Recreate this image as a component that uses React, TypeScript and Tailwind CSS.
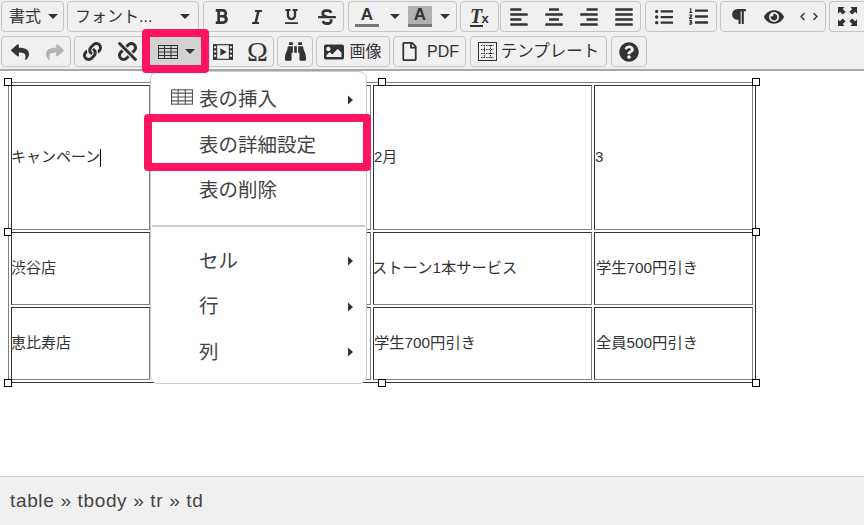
import React from "react";
import { FaBinoculars, FaImage, FaLink, FaUnlink, FaQuestionCircle, FaEye, FaParagraph, FaBold, FaItalic, FaUnderline, FaStrikethrough, FaListUl, FaListOl, FaAlignLeft, FaAlignCenter, FaAlignRight, FaAlignJustify, FaReply, FaShare, FaChevronLeft, FaChevronRight, FaRegFile } from "react-icons/fa";

const Caret = ({ color = "#333" }: { color?: string }) => (
  <svg width="10" height="5" viewBox="0 0 10 5"><path d="M0 0h10L5 5z" fill={color} /></svg>
);
const Group = ({ w, children, className = "" }: { w: string; children: React.ReactNode; className?: string }) => (
  <div className={`${w} h-[31px] shrink-0 flex items-center border border-[#c5c5c5] rounded-[4px] bg-[#f0f0f0] ${className}`}>{children}</div>
);
const Btn = ({ w, children }: { w: string; children: React.ReactNode }) => (
  <div className={`${w} h-full flex items-center justify-center shrink-0 text-[#333]`}>{children}</div>
);
const TableIcon = ({ s = 20, h = 14, c = "#333" }: { s?: number; h?: number; c?: string }) => (
  <svg width={s} height={h} viewBox="0 0 20 14" fill="none" stroke={c} strokeWidth="1">
    <rect x="0.5" y="0.5" width="19" height="13" />
    <path d="M0 3.5h20M0 7h20M0 10.5h20M6.5 0v14M13 0v14" />
  </svg>
);

const Toolbar = () => (
  <div className="h-[71px] bg-[#f0f0f0] border-b-2 border-[#a8a8a8] flex flex-col gap-[4px] pt-[1px] pl-[1px]">
    <div className="flex gap-[3px] h-[31px]">
      <Group w="w-[63px]" className="pl-[7px] gap-[7px] text-[16px]"><span>書式</span><Caret /></Group>
      <Group w="w-[132px]" className="pl-[7px] text-[16px]"><span className="w-[105px] whitespace-nowrap">フォント...</span><Caret /></Group>
      <Group w="w-[141px]" className="ml-[1px]">
        <Btn w="w-[35px]"><FaBold size={17} /></Btn>
        <Btn w="w-[35px]"><FaItalic size={16} /></Btn>
        <Btn w="w-[35px]"><FaUnderline size={15} /></Btn>
        <Btn w="w-[35px]"><FaStrikethrough size={18} /></Btn>
      </Group>
      <Group w="w-[109px]" className="ml-[1px]">
        <Btn w="w-[36px]"><span className="font-bold text-[17px] leading-[18px] border-b-[3px] border-[#777] px-[6px] font-['Liberation_Sans']">A</span></Btn>
        <Btn w="w-[20px]"><Caret /></Btn>
        <Btn w="w-[30px]"><span className="font-bold text-[17px] leading-[18px] bg-[#b0b0b0] border-b-[3px] border-[#777] px-[6px] font-['Liberation_Sans']">A</span></Btn>
        <Btn w="w-[20px]"><Caret /></Btn>
      </Group>
      <Group w="w-[39px]" className="justify-center">
        <span className="relative font-['Liberation_Serif'] italic font-bold text-[20px] leading-[18px] border-b-[2px] border-[#333] w-[13px] mr-[7px] text-center">T<span className="absolute left-[12px] bottom-[-3px] not-italic text-[13px] font-['Liberation_Sans']">x</span></span>
      </Group>
      <Group w="w-[141px]" className="ml-[-2px] justify-between">
        <Btn w="w-[35px]"><FaAlignLeft size={20} /></Btn>
        <Btn w="w-[35px]"><FaAlignCenter size={20} /></Btn>
        <Btn w="w-[35px]"><FaAlignRight size={20} /></Btn>
        <Btn w="w-[35px]"><FaAlignJustify size={20} /></Btn>
      </Group>
      <Group w="w-[72px]" className="ml-[1px]">
        <Btn w="w-[35px]"><FaListUl size={18} /></Btn>
        <Btn w="w-[35px]"><FaListOl size={19} /></Btn>
      </Group>
      <Group w="w-[106px]">
        <Btn w="w-[35px]"><FaParagraph size={17} /></Btn>
        <Btn w="w-[35px]"><FaEye size={20} /></Btn>
        <Btn w="w-[35px]"><FaChevronLeft size={9} /><FaChevronRight size={9} className="ml-[4px]" /></Btn>
      </Group>
      <Group w="w-[40px] rounded-r-none border-r-0" className="pl-[7px]">
        <svg width="21" height="19" viewBox="0 0 20 20" fill="#333"><path d="M0 0h7L5 2l3 3-3 3-3-3-2 2zM20 0v7l-2-2-3 3-3-3 3-3-2-2zM0 20v-7l2 2 3-3 3 3-3 3 2 2zM20 20h-7l2-2-3-3 3-3 3 3 2-2z" /></svg>
      </Group>
    </div>
    <div className="flex h-[31px]">
      <Group w="w-[70px]">
        <Btn w="w-[35px]"><FaReply size={18} /></Btn>
        <Btn w="w-[35px]"><FaShare size={18} color="#b4b4b4" /></Btn>
      </Group>
      <Group w="w-[200px]" className="ml-[3px]">
        <Btn w="w-[35px]"><FaLink size={19} /></Btn>
        <Btn w="w-[35px]"><FaUnlink size={19} /></Btn>
        <div className="w-[59px] h-[29px] shrink-0 ml-[1px] bg-[#d2d2d2] flex items-center justify-center gap-[7px] pl-[1px]"><TableIcon /><Caret /></div>
        <Btn w="w-[35px]">
          <svg width="20" height="16" viewBox="0 0 19 15"><path d="M0 0h19v15H0z" fill="#333" /><path d="M4 1h11v13H4zM1 2h2v2H1zM1 6h2v2H1zM1 10h2v2H1zM16 2h2v2h-2zM16 6h2v2h-2zM16 10h2v2h-2z" fill="#f0f0f0" /><path d="M7 4l6 3.500L7 11z" fill="#333" /></svg>
        </Btn>
        <Btn w="w-[35px]"><span className="text-[28px] font-['Liberation_Serif'] leading-none">Ω</span></Btn>
      </Group>
      <Group w="w-[36px]" className="ml-[3px] justify-center"><FaBinoculars size={21} /></Group>
      <Group w="w-[74px]" className="ml-[3px] justify-center gap-[5px] text-[16px]"><FaImage size={20} /><span>画像</span></Group>
      <Group w="w-[73px]" className="ml-[3px] justify-center gap-[8px] text-[16px]"><FaRegFile size={19} /><span className="font-['Liberation_Sans']">PDF</span></Group>
      <Group w="w-[137px]" className="ml-[4px] justify-center gap-[4px] text-[16.5px]">
        <svg width="19" height="19" viewBox="0 0 19 19" fill="none" stroke="#333"><rect x="0.500" y="0.500" width="18" height="18" /><path d="M3 3.500h13M3 7.500h13M3 11.500h13M3 15.500h13M6.500 3v13M12.500 3v13" strokeDasharray="1.500 1" /></svg>
        <span>テンプレート</span>
      </Group>
      <Group w="w-[36px]" className="ml-[4px] justify-center"><FaQuestionCircle size={20} /></Group>
    </div>
  </div>
);

const Cell = ({ children, className = "" }: { children?: React.ReactNode; className?: string }) => (
  <td className={`border border-t-[#333] border-l-[#333] border-r-[#808080] border-b-[#808080] p-0 align-middle ${className}`}>{children}</td>
);

const Handle = ({ className }: { className: string }) => (
  <div className={`absolute w-[8px] h-[8px] bg-white border border-black ${className}`} />
);

const Arrow = () => (
  <svg width="5" height="9" viewBox="0 0 5 9" className="absolute right-[13px] top-1/2 -translate-y-1/2"><path d="M0 0l5 4.500L0 9z" fill="#333" /></svg>
);

const Item = ({ icon, children, arrow }: { icon?: React.ReactNode; children: React.ReactNode; arrow?: boolean }) => (
  <div className="relative h-[45.5px] flex items-center pl-[48px] text-[19.5px] text-[#444]">
    {icon && <span className="absolute left-[20px] top-[11px] flex">{icon}</span>}
    <span>{children}</span>
    {arrow && <Arrow />}
  </div>
);

export default function App() {
  return (
    <div className="relative w-[864px] h-[525px] overflow-hidden bg-white text-[#333] font-['Liberation_Sans','Noto_Sans_CJK_JP',sans-serif] flex flex-col">
      <Toolbar />
      <div className="flex-1 relative">
        <table className="absolute left-[8px] top-[11px] w-[748px] h-[301px] border border-t-[#808080] border-l-[#808080] border-r-[#333] border-b-[#333] border-separate border-spacing-[2px] text-[15px] text-[#333] table-fixed">
          <colgroup>
            <col className="w-[139px]" />
            <col className="w-[219px]" />
            <col className="w-[219px]" />
            <col />
          </colgroup>
          <tbody>
            <tr className="h-[145px]">
              <Cell><span className="inline-block -ml-[1px]">キャンペーン</span><span className="inline-block w-px h-[18px] bg-black align-middle" /></Cell>
              <Cell />
              <Cell>2月</Cell>
              <Cell>3</Cell>
            </tr>
            <tr className="h-[73px]">
              <Cell><span className="inline-block -ml-[1px]">渋谷店</span></Cell>
              <Cell />
              <Cell className="text-[15.3px]"><span className="inline-block -ml-[2px]">ストーン1本サービス</span></Cell>
              <Cell className="text-[15.3px]"><span className="inline-block ml-[1px]">学生700円引き</span></Cell>
            </tr>
            <tr className="h-[73px]">
              <Cell><span className="inline-block -ml-[1px]">恵比寿店</span></Cell>
              <Cell />
              <Cell className="text-[15.3px]">学生700円引き</Cell>
              <Cell className="text-[15.3px]"><span className="inline-block ml-[1px]">全員500円引き</span></Cell>
            </tr>
          </tbody>
        </table>
        <Handle className="left-[4px] top-[7px]" />
        <Handle className="left-[378px] top-[7px]" />
        <Handle className="left-[752px] top-[7px]" />
        <Handle className="left-[4px] top-[157px]" />
        <Handle className="left-[752px] top-[157px]" />
        <Handle className="left-[4px] top-[308px]" />
        <Handle className="left-[378px] top-[308px]" />
        <Handle className="left-[752px] top-[308px]" />
      </div>
      <div className="h-[49px] bg-[#f0f0f0] border-t border-[#ccc] flex items-center pl-[10px] text-[19px] tracking-[0.65px] text-[#444]">table » tbody » tr » td</div>

      <div className="absolute left-[150px] top-[71px] w-[217px] h-[313px] bg-white border border-[#ccc] rounded-[8px] pt-[5px]">
        <Item icon={<TableIcon s={22} h={18} c="#555" />} arrow>表の挿入</Item>
        <Item>表の詳細設定</Item>
        <Item>表の削除</Item>
        <div className="h-[2px] bg-[#ccc] mx-[1px] mt-[11px] mb-[12px]" />
        <Item arrow>セル</Item>
        <Item arrow>行</Item>
        <Item arrow>列</Item>
      </div>

      <div className="absolute left-[144px] top-[114px] w-[227px] h-[57px] border-[8px] border-[#ff1460] rounded-[4px]" />
      <div className="absolute left-[142px] top-[29px] w-[67px] h-[44px] border-[8px] border-[#ff1460] rounded-[4px]" />
    </div>
  );
}
